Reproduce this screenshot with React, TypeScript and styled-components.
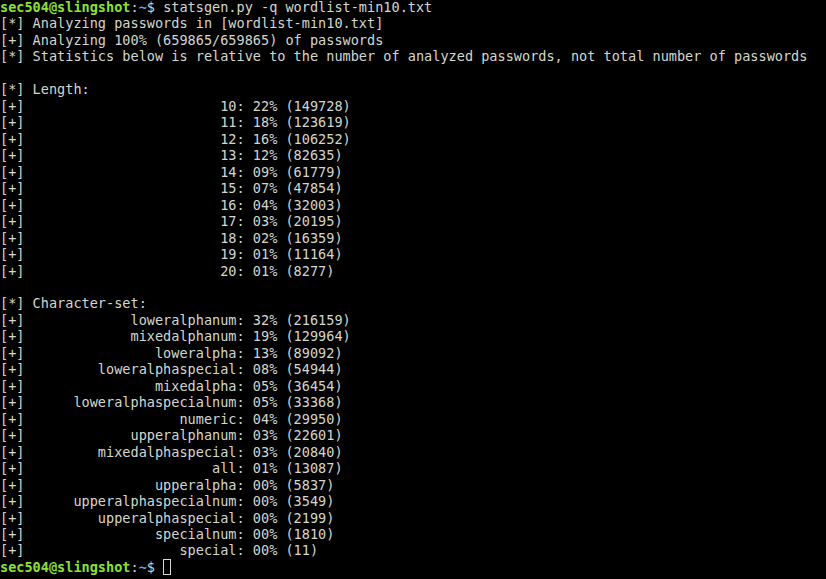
import React from "react";
import styled, { createGlobalStyle } from "styled-components";

const Global = createGlobalStyle`
  html, body { margin: 0; padding: 0; background: #000; }
  body { width: 826px; height: 579px; overflow: hidden; }
`;

const Terminal = styled.div`
  width: 826px;
  height: 579px;
  background: #000000;
  overflow: hidden;
`;

const Screen = styled.div`
  margin-top: -1px;
  color: #d3d7cf;
  font-family: "DejaVu Sans Mono", "Liberation Mono", monospace;
  font-size: 13.55px;
  line-height: 16.47px;
`;

const Line = styled.div`
  white-space: pre;
  height: 16.47px;
`;

const User = styled.span`
  color: #8ae234;
  font-weight: bold;
`;

const Path = styled.span`
  color: #729fcf;
  font-weight: bold;
`;

const Cursor = styled.span`
  display: inline-block;
  width: 6px;
  height: 14px;
  border: 1px solid #d3d7cf;
  vertical-align: -3px;
`;

const pad = (s: string, n: number) => " ".repeat(Math.max(0, n - s.length)) + s;

const lengths: [string, string, string][] = [
  ["10", "22", "149728"],
  ["11", "18", "123619"],
  ["12", "16", "106252"],
  ["13", "12", "82635"],
  ["14", "09", "61779"],
  ["15", "07", "47854"],
  ["16", "04", "32003"],
  ["17", "03", "20195"],
  ["18", "02", "16359"],
  ["19", "01", "11164"],
  ["20", "01", "8277"],
];

const charsets: [string, string, string][] = [
  ["loweralphanum", "32", "216159"],
  ["mixedalphanum", "19", "129964"],
  ["loweralpha", "13", "89092"],
  ["loweralphaspecial", "08", "54944"],
  ["mixedalpha", "05", "36454"],
  ["loweralphaspecialnum", "05", "33368"],
  ["numeric", "04", "29950"],
  ["upperalphanum", "03", "22601"],
  ["mixedalphaspecial", "03", "20840"],
  ["all", "01", "13087"],
  ["upperalpha", "00", "5837"],
  ["upperalphaspecialnum", "00", "3549"],
  ["upperalphaspecial", "00", "2199"],
  ["specialnum", "00", "1810"],
  ["special", "00", "11"],
];

const Prompt: React.FC<{ children?: React.ReactNode }> = ({ children }) => (
  <Line>
    <User>sec504@slingshot</User>:<Path>~</Path>$ {children}
  </Line>
);

export default function App() {
  return (
    <>
      <Global />
      <Terminal>
        <Screen>
          <Prompt>statsgen.py -q wordlist-min10.txt</Prompt>
          <Line>[*] Analyzing passwords in [wordlist-min10.txt]</Line>
          <Line>[+] Analyzing 100% (659865/659865) of passwords</Line>
          <Line>[*] Statistics below is relative to the number of analyzed passwords, not total number of passwords</Line>
          <Line> </Line>
          <Line>[*] Length:</Line>
          {lengths.map(([k, p, c]) => (
            <Line key={k}>{`[+] ${pad(k, 25)}: ${p}% (${c})`}</Line>
          ))}
          <Line> </Line>
          <Line>[*] Character-set:</Line>
          {charsets.map(([k, p, c]) => (
            <Line key={k}>{`[+] ${pad(k, 25)}: ${p}% (${c})`}</Line>
          ))}
          <Prompt>
            <Cursor />
          </Prompt>
        </Screen>
      </Terminal>
    </>
  );
}
